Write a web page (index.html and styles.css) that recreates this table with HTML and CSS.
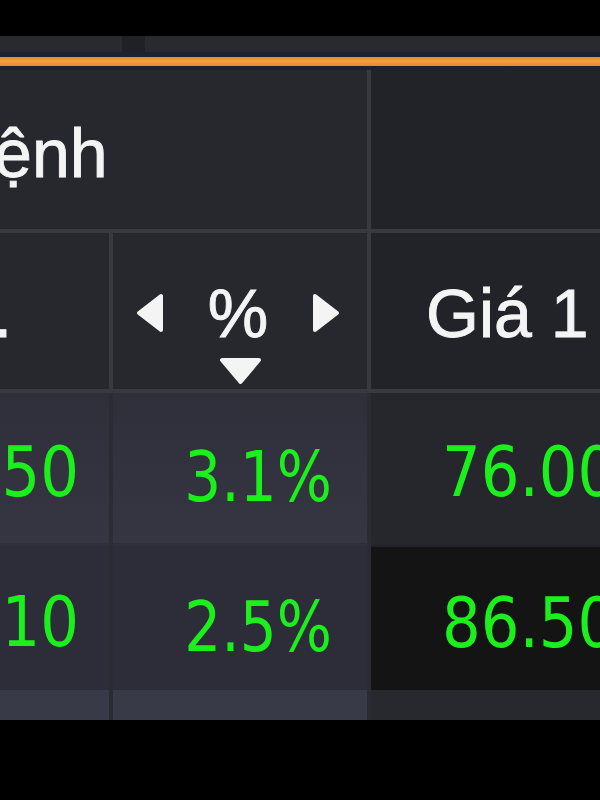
FILE: index.html
```html
<!DOCTYPE html>
<html lang="vi">
<head>
<meta charset="utf-8">
<title>Bảng giá</title>
<link rel="stylesheet" href="styles.css">
</head>
<body>
<div class="screen">
  <div class="top-gap"></div>
  <div class="toolbar"><span class="tab-mark"></span></div>
  <div class="accent"><div class="accent-line"></div></div>

  <div class="row head1">
    <div class="cell span-ab"><span class="cut-lenh">lệnh</span></div>
    <div class="cell col-c dark-head"></div>
  </div>

  <div class="row head2">
    <div class="cell col-a"><span class="cut-kl">KL.</span></div>
    <div class="cell col-b sort">
      <div class="sort-line">
        <svg class="arrow-lr" viewBox="0 0 28 40" aria-hidden="true"><polygon points="25,3 25,37 3,20"/></svg>
        <span class="pct-label">%</span>
        <svg class="arrow-lr" viewBox="0 0 28 40" aria-hidden="true"><polygon points="3,3 3,37 25,20"/></svg>
      </div>
      <svg class="arrow-down" viewBox="0 0 43 28" aria-hidden="true"><polygon points="3,3 40,3 21.5,25"/></svg>
    </div>
    <div class="cell col-c dark-head"><span class="head-text">Giá 1</span></div>
  </div>

  <div class="row data row1">
    <div class="cell col-a num"><span class="val val-r">50</span></div>
    <div class="cell col-b num pct"><span class="val val-r val-pct">3.1%</span></div>
    <div class="cell col-c num price"><span class="val val-l">76.00</span></div>
  </div>

  <div class="row data row2">
    <div class="cell col-a num"><span class="val val-r">10</span></div>
    <div class="cell col-b num pct"><span class="val val-r val-pct">2.5%</span></div>
    <div class="cell col-c num price"><span class="val val-l">86.50</span></div>
  </div>

  <div class="row data row3">
    <div class="cell col-a"></div>
    <div class="cell col-b"></div>
    <div class="cell col-c"></div>
  </div>
</div>
</body>
</html>
```

FILE: styles.css
```css
html, body {
  margin: 0;
  padding: 0;
  background: #000;
}

.screen {
  width: 600px;
  height: 800px;
  overflow: hidden;
  display: flex;
  flex-direction: column;
  background: #000;
  font-family: "Liberation Sans", Arial, sans-serif;
}

.top-gap {
  height: 36px;
  flex: none;
}

.toolbar {
  height: 16px;
  flex: none;
  background: #282a30;
  display: flex;
  padding-left: 122px;
}

.tab-mark {
  width: 23px;
  height: 16px;
  background: #1f2127;
}

.accent {
  height: 18px;
  flex: none;
  background: #1d2230;
  display: flex;
  flex-direction: column;
  justify-content: center;
}

.accent-line {
  height: 9px;
  background: linear-gradient(#e58a2a, #f7a03a 50%, #e58a2a);
}

.row {
  display: flex;
  flex: none;
}

.cell {
  box-sizing: border-box;
  overflow: hidden;
  display: flex;
}

.col-a {
  width: 113px;
  border-right: 4px solid #393a3f;
}

.col-b {
  width: 258px;
  border-right: 4px solid #393a3f;
}

.col-c {
  flex: 1;
}

.span-ab {
  width: 371px;
  border-right: 4px solid #393a3f;
}

/* header rows */
.head1 {
  height: 163px;
}

.head1 .cell {
  border-bottom: 4px solid #393a3f;
  background: #27282e;
  align-items: center;
}

.head1 .dark-head {
  background: #222328;
}

.cut-lenh,
.cut-kl,
.pct-label,
.head-text {
  color: #f4f4f4;
  font-size: 68px;
  line-height: 68px;
  white-space: nowrap;
  -webkit-text-stroke: 0.9px #f4f4f4;
}

.cut-lenh {
  margin-left: -21px;
  margin-top: 6px;
}

.head2 {
  height: 160px;
}

.head2 .cell {
  border-bottom: 4px solid #393a3f;
  background: #27282e;
}

.head2 .dark-head {
  background: #222328;
}

.cut-kl {
  margin-left: -90px;
  padding-top: 46px;
}

.sort {
  flex-direction: column;
  align-items: center;
  padding-top: 46px;
}

.sort-line {
  display: flex;
  align-items: center;
  gap: 44px;
  height: 68px;
  padding-right: 4px;
}

.arrow-lr {
  width: 28px;
  height: 40px;
  fill: #f4f4f4;
  stroke: #f4f4f4;
  stroke-width: 4;
  stroke-linejoin: round;
}

.arrow-down {
  margin-top: 10px;
  width: 43px;
  height: 28px;
  fill: #f4f4f4;
  stroke: #f4f4f4;
  stroke-width: 4;
  stroke-linejoin: round;
}

.head-text {
  padding-top: 46px;
  padding-left: 55px;
}

/* data rows */
.num {
  font-family: "DejaVu Sans", sans-serif;
  font-size: 70px;
  line-height: 70px;
  color: #1cf01c;
  align-items: center;
  padding-top: 8px;
  white-space: nowrap;
}

.val {
  display: inline-block;
  transform: scaleX(0.87);
}

.val-r {
  transform-origin: right center;
}

.val-l {
  transform-origin: left center;
}

.val-pct {
  transform: scaleX(0.83);
}

.col-a.num {
  justify-content: flex-end;
  padding-right: 30px;
}

.col-b.num {
  justify-content: flex-end;
  padding-right: 35px;
  padding-top: 18px;
}

.col-c.num {
  padding-left: 71px;
}

.data .col-a,
.data .col-b {
  border-right-color: #2b2c33;
}

.row1 {
  height: 152px;
}

.row1 .col-a,
.row1 .col-b {
  background: linear-gradient(#2e2f39, #353642);
  border-bottom: 2px solid #2e2f39;
}

.row1 .col-c {
  background: #26272c;
  border-bottom: 2px solid #26272c;
}

.row2 {
  height: 145px;
}

.row2 .col-a,
.row2 .col-b {
  background: #2c2d38;
}

.row2 .col-c {
  background: #141414;
  border-top: 2px solid #222228;
}

.row3 {
  height: 30px;
}

.row3 .col-a,
.row3 .col-b {
  background: #393a47;
}

.row3 .col-c {
  background: #28292e;
}
```
